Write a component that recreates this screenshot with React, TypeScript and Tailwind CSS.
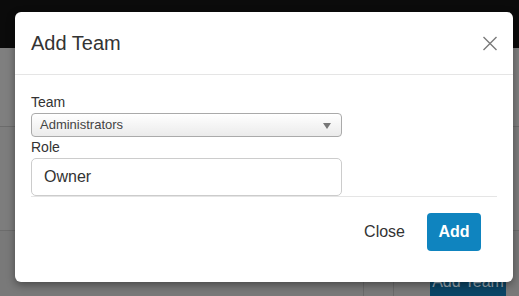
import { useState } from "react";

export default function App() {
  const [role, setRole] = useState("Owner");

  return (
    <div className="relative w-[519px] h-[296px] overflow-hidden bg-[#7c7c7c] font-['Liberation_Sans',Arial,sans-serif]">
      {/* Page behind the backdrop */}
      <div className="flex flex-col h-full">
        <div className="h-[48px] bg-[#0b0b0b]" />
        <div className="h-[79px] border-b border-[#6c6c6c] bg-[#7f7f7f]" />
        <div className="h-[104px] border-b border-[#6c6c6c] bg-[#7d7d7d]" />
        <div className="flex-1 flex bg-[#797979]">
          <div className="w-[363px]" />
          <div className="w-[30px] border-l border-[#6a6a6a] mt-[51px]" />
          <div className="w-[37px] border-l border-[#6a6a6a] mt-[51px]" />
          <div className="flex flex-col justify-end">
            <div className="w-[76px] h-[32px] bg-[#0b4566] text-[#9aa8b2] text-[16px] flex items-center justify-center mb-[-2px]">
              Add Team
            </div>
          </div>
        </div>
      </div>

      {/* Modal */}
      <div className="absolute left-[15px] top-[12px] w-[498px] h-[270px] bg-white rounded-[6px] shadow-[0_3px_9px_rgba(0,0,0,0.4)] flex flex-col">
        <div className="h-[63px] flex items-center justify-between px-4 border-b border-[#e5e5e5]">
          <h4 className="text-[20px] text-[#333] leading-none">Add Team</h4>
          <button className="w-[14px] h-[15px] flex items-center justify-center">
            <svg width="14" height="15" viewBox="0 0 14 15">
              <path d="M0.5 1 L13.5 14 M13.5 1 L0.5 14" stroke="#7a7a7a" strokeWidth="1.4" fill="none" />
            </svg>
          </button>
        </div>

        <div className="px-4 pt-[17px]">
          <label className="block text-[14px] text-[#333] leading-[21px]">Team</label>
          <div className="relative w-[311px] h-[24px] rounded-[4px] border border-[#aaa] bg-gradient-to-b from-white to-[#ebebeb] shadow-[inset_0_1px_0_#fff] flex items-center pl-2">
            <span className="text-[13px] text-[#444]">Administrators</span>
            <svg className="absolute right-[10px] top-[9px]" width="8" height="6" viewBox="0 0 8 6">
              <path d="M0 0 H8 L4 6 Z" fill="#777" />
            </svg>
          </div>
          <label className="block text-[14px] text-[#333] leading-[21px]">Role</label>
          <input
            value={role}
            onChange={(e) => setRole(e.target.value)}
            className="block w-[311px] h-[38px] rounded-[5px] border border-[#ccc] pl-3 text-[16px] text-[#333] outline-none"
          />
        </div>

        <div className="mx-4 border-t border-[#e5e5e5] flex justify-end items-center gap-[10px] pt-4 pr-4">
          <button className="h-[38px] px-3 text-[16px] text-[#333]">Close</button>
          <button className="h-[38px] w-[54px] rounded-[4px] bg-[#0f84bf] text-white text-[16px] font-bold">
            Add
          </button>
        </div>
      </div>
    </div>
  );
}
